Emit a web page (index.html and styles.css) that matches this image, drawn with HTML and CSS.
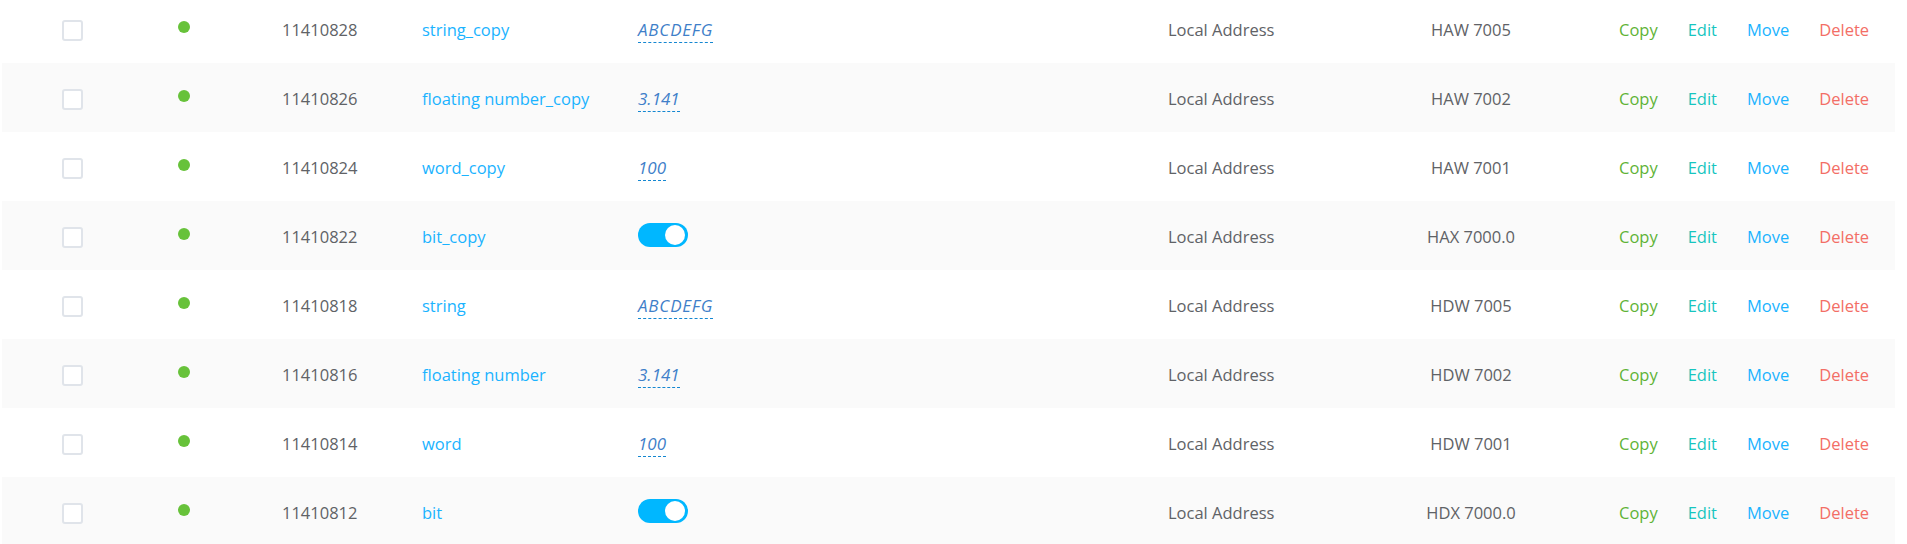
FILE: index.html
```html
<!DOCTYPE html>
<html>
<head>
<meta charset="utf-8">
<link rel="stylesheet" href="styles.css">
</head>
<body>
<div class="table">
  <div class="row">
    <div class="c-check"><span class="checkbox"></span></div>
    <div class="c-dot"><span class="dot"></span></div>
    <div class="c-id">11410828</div>
    <div class="c-name">string_copy</div>
    <div class="c-value"><span class="editable">ABCDEFG</span></div>
    <div class="c-addr">Local Address</div>
    <div class="c-port">HAW 7005</div>
    <div class="c-actions"><a class="copy">Copy</a><a class="edit">Edit</a><a class="move">Move</a><a class="del">Delete</a></div>
  </div>
  <div class="row">
    <div class="c-check"><span class="checkbox"></span></div>
    <div class="c-dot"><span class="dot"></span></div>
    <div class="c-id">11410826</div>
    <div class="c-name">floating number_copy</div>
    <div class="c-value"><span class="editable num">3.141</span></div>
    <div class="c-addr">Local Address</div>
    <div class="c-port">HAW 7002</div>
    <div class="c-actions"><a class="copy">Copy</a><a class="edit">Edit</a><a class="move">Move</a><a class="del">Delete</a></div>
  </div>
  <div class="row">
    <div class="c-check"><span class="checkbox"></span></div>
    <div class="c-dot"><span class="dot"></span></div>
    <div class="c-id">11410824</div>
    <div class="c-name">word_copy</div>
    <div class="c-value"><span class="editable num">100</span></div>
    <div class="c-addr">Local Address</div>
    <div class="c-port">HAW 7001</div>
    <div class="c-actions"><a class="copy">Copy</a><a class="edit">Edit</a><a class="move">Move</a><a class="del">Delete</a></div>
  </div>
  <div class="row">
    <div class="c-check"><span class="checkbox"></span></div>
    <div class="c-dot"><span class="dot"></span></div>
    <div class="c-id">11410822</div>
    <div class="c-name">bit_copy</div>
    <div class="c-value"><span class="switch"><span class="knob"></span></span></div>
    <div class="c-addr">Local Address</div>
    <div class="c-port">HAX 7000.0</div>
    <div class="c-actions"><a class="copy">Copy</a><a class="edit">Edit</a><a class="move">Move</a><a class="del">Delete</a></div>
  </div>
  <div class="row">
    <div class="c-check"><span class="checkbox"></span></div>
    <div class="c-dot"><span class="dot"></span></div>
    <div class="c-id">11410818</div>
    <div class="c-name">string</div>
    <div class="c-value"><span class="editable">ABCDEFG</span></div>
    <div class="c-addr">Local Address</div>
    <div class="c-port">HDW 7005</div>
    <div class="c-actions"><a class="copy">Copy</a><a class="edit">Edit</a><a class="move">Move</a><a class="del">Delete</a></div>
  </div>
  <div class="row">
    <div class="c-check"><span class="checkbox"></span></div>
    <div class="c-dot"><span class="dot"></span></div>
    <div class="c-id">11410816</div>
    <div class="c-name">floating number</div>
    <div class="c-value"><span class="editable num">3.141</span></div>
    <div class="c-addr">Local Address</div>
    <div class="c-port">HDW 7002</div>
    <div class="c-actions"><a class="copy">Copy</a><a class="edit">Edit</a><a class="move">Move</a><a class="del">Delete</a></div>
  </div>
  <div class="row">
    <div class="c-check"><span class="checkbox"></span></div>
    <div class="c-dot"><span class="dot"></span></div>
    <div class="c-id">11410814</div>
    <div class="c-name">word</div>
    <div class="c-value"><span class="editable num">100</span></div>
    <div class="c-addr">Local Address</div>
    <div class="c-port">HDW 7001</div>
    <div class="c-actions"><a class="copy">Copy</a><a class="edit">Edit</a><a class="move">Move</a><a class="del">Delete</a></div>
  </div>
  <div class="row">
    <div class="c-check"><span class="checkbox"></span></div>
    <div class="c-dot"><span class="dot"></span></div>
    <div class="c-id">11410812</div>
    <div class="c-name">bit</div>
    <div class="c-value"><span class="switch"><span class="knob"></span></span></div>
    <div class="c-addr">Local Address</div>
    <div class="c-port">HDX 7000.0</div>
    <div class="c-actions"><a class="copy">Copy</a><a class="edit">Edit</a><a class="move">Move</a><a class="del">Delete</a></div>
  </div>
</div>
</body>
</html>
```
FILE: styles.css
```css
html, body {
  margin: 0;
  padding: 0;
  background: #ffffff;
  overflow: hidden;
}
body {
  font-family: "Open Sans", "Noto Sans", sans-serif;
  font-size: 16.5px;
  color: #606266;
}
.table {
  margin: -6px 0 0 2px;
  width: 1893px;
}
.row {
  display: grid;
  grid-template-columns: 140px 140px 140px 216px 530px 200px 206px 1fr;
  align-items: center;
  height: 69px;
  background: #ffffff;
}
.row:nth-child(even) {
  background: #fafafa;
}
.row > div {
  line-height: 22px;
}
.c-id, .c-name, .c-value, .c-addr, .c-port, .c-actions {
  padding-top: 2px;
}
.c-check {
  display: flex;
  justify-content: center;
}
.checkbox {
  display: block;
  width: 21px;
  height: 21px;
  box-sizing: border-box;
  border: 2px solid #e0e4ea;
  border-radius: 3px;
  background: #fff;
  margin-top: 3px;
}
.c-dot {
  padding-left: 36px;
}
.dot {
  display: block;
  width: 12px;
  height: 12px;
  border-radius: 50%;
  background: #67c23a;
  margin-top: -3px;
}
.c-id {
  color: #606266;
}
.c-name {
  color: #1ab3ff;
}
.editable {
  font-size: 17px;
  letter-spacing: 0.8px;
  font-style: italic;
  color: #3f7fc9;
  border-bottom: 1px dashed #1487d1;
  padding-bottom: 1px;
}
.editable.num {
  letter-spacing: 0;
}
.c-value .switch {
  margin-top: -4px;
}
.switch {
  display: flex;
  justify-content: flex-end;
  align-items: center;
  width: 50px;
  height: 24px;
  box-sizing: border-box;
  padding: 0 3px;
  border-radius: 12px;
  background: #00b7ff;
}
.knob {
  display: block;
  width: 20px;
  height: 20px;
  border-radius: 50%;
  background: #fff;
}
.c-addr {
  color: #606266;
}
.c-port {
  text-align: center;
  color: #606266;
}
.c-actions {
  display: flex;
  gap: 30px;
  padding-left: 45px;
}
.c-actions a {
  cursor: pointer;
}
.copy { color: #5fb336; }
.edit { color: #17c5bf; }
.move { color: #1ab3ff; }
.del { color: #f36e66; }
```
